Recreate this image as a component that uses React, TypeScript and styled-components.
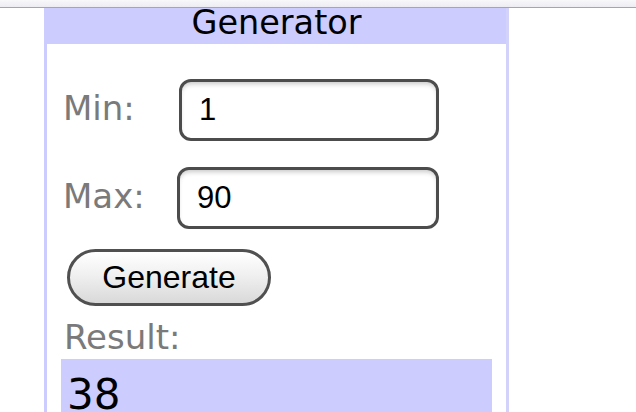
import React from "react";
import styled, { createGlobalStyle } from "styled-components";

const GlobalStyle = createGlobalStyle`
html, body {
margin: 0;
padding: 0;
background: #FFFFFF;
overflow: hidden;
}
`

const App = () => {
return(
    <>
    <GlobalStyle/>
    <TopBar/>
    <Page>
        <Panel>
            <Header>Generator</Header>
            <Body>
                <Row>
                    <Label>Min:</Label>
                    <Field $nudge={2} defaultValue="1"/>
                </Row>
                <Row>
                    <Label>Max:</Label>
                    <Field $nudge={0} defaultValue="90"/>
                </Row>
                <Button>Generate</Button>
                <ResultLabel>Result:</ResultLabel>
                <ResultBox>38</ResultBox>
            </Body>
        </Panel>
    </Page>
    </>
)
}
export default App;

const TopBar = styled.div`
height: 7px;
background: linear-gradient(#f8f8fb, #ececf2);
border-bottom: 1px solid #a4a4b8;
`

const Page = styled.div`
padding-left: 44px;
`

const Panel = styled.div`
width: 459px;
border-left: 3px solid #ccccff;
border-right: 3px solid #d2d2fa;
background-color: #ccccff;
`

const Header = styled.div`
height: 36px;
line-height: 29px;
font-family: 'DejaVu Sans', sans-serif;
font-size: 33.5px;
color: #000000;
text-align: center;
`

const Body = styled.div`
background-color: #FFFFFF;
box-sizing: border-box;
height: 400px;
padding: 35px 0 0 14px;
display: flex;
flex-direction: column;
align-items: flex-start;
`

const Row = styled.div`
display: grid;
grid-template-columns: 114px 262px;
align-items: center;
padding-left: 2px;
margin-bottom: 26px;
`

const Label = styled.div`
font-family: 'DejaVu Sans', sans-serif;
font-size: 34px;
line-height: 38px;
color: #7a7a7a;
padding-bottom: 4px;
`

const Field = styled.input<{ $nudge: number }>`
box-sizing: border-box;
width: ${p => 262 - p.$nudge}px;
height: 62px;
margin-left: ${p => p.$nudge}px;
border: 3px solid #4c4c4c;
border-radius: 12px;
padding: 0 0 0 17px;
font-family: 'Liberation Sans', Arial, sans-serif;
font-size: 31px;
color: #000000;
background: #FFFFFF;
box-shadow: inset 0 4px 5px -2px rgba(0, 0, 0, 0.22);
outline: none;
`

const Button = styled.button`
box-sizing: border-box;
width: 204px;
height: 57px;
margin: -6px 0 0 6px;
border: 3px solid #505050;
border-radius: 29px;
background: linear-gradient(#ffffff, #f0f0f0 45%, #d9d9d9);
font-family: 'Liberation Sans', Arial, sans-serif;
font-size: 32px;
color: #000000;
padding: 0;
cursor: pointer;
`

const ResultLabel = styled.div`
font-family: 'DejaVu Sans', sans-serif;
font-size: 34px;
line-height: 38px;
color: #7a7a7a;
margin-top: 12px;
padding-left: 3px;
`

const ResultBox = styled.div`
box-sizing: border-box;
width: 431px;
height: 80px;
margin-top: 3px;
background-color: #ccccff;
padding: 11px 0 0 6px;
font-family: 'DejaVu Sans', sans-serif;
font-size: 42px;
color: #000000;
`
